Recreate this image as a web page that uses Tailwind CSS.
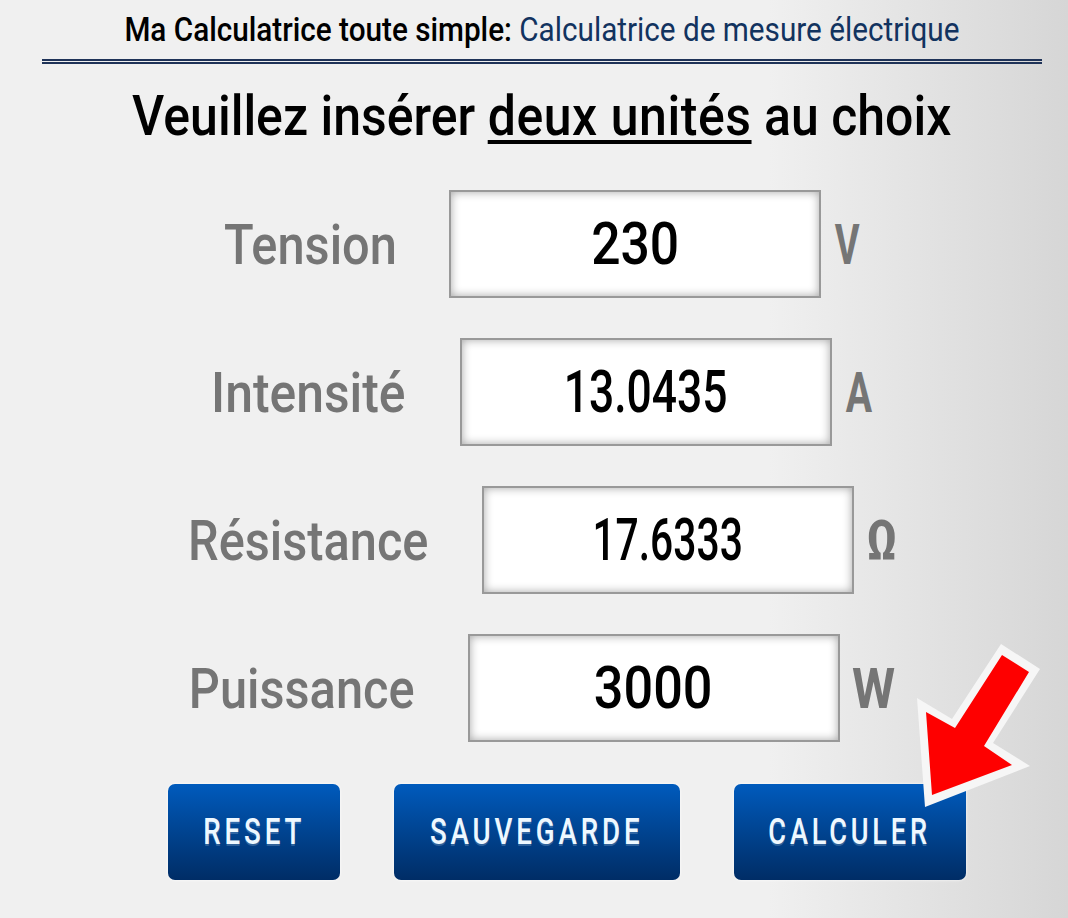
<!DOCTYPE html>
<html lang="fr">
<head>
    <meta charset="UTF-8">
    <meta name="viewport" content="width=device-width, initial-scale=1.0">
    <title>Calculatrice de mesure électrique</title>
    <script src="https://cdn.jsdelivr.net/npm/@tailwindcss/browser@4"></script>
</head>

<body class="relative w-[1068px] h-[918px] overflow-hidden font-['Roboto',sans-serif] bg-[linear-gradient(90deg,#f0f0f0_0%,#f0f0f0_72%,#d6d6d6_100%)]">

    <!-- header -->
    <div class="ml-[42px] w-[1000px] h-[64px] pt-[10px] border-b-[5px] border-double border-[#1f3358] flex justify-center text-[33px] leading-[40px] text-black whitespace-nowrap">
        <div class="scale-x-[0.9]">
            <span class="font-medium">Ma Calculatrice toute simple:</span> <span class="text-[#12335f]">Calculatrice de mesure électrique</span>
        </div>
    </div>

    <div class="mt-[22px] ml-[42px] w-[1000px] h-[60px] flex justify-center text-[56px] font-medium leading-[60px] text-black whitespace-nowrap">
        <h1 class="scale-x-[0.893]">
            Veuillez insérer <u class="underline decoration-[4px] underline-offset-[5px] tracking-[0.6px]">deux unités</u> au choix
        </h1>
    </div>

    <!-- fields -->
    <div class="mt-[44px] flex flex-col items-center gap-[40px] pl-[16px]">
        <div class="flex items-center">
            <div class="w-[170px] pt-[2px] flex justify-center text-[56px] font-medium text-[#757575]"><span class="scale-x-[0.87]">Tension</span></div>
            <div class="ml-[54px] w-[372px] h-[108px] flex items-center justify-center text-[60px] font-medium text-black bg-white border-2 border-[#999] shadow-[inset_0_0_10px_rgba(0,0,0,0.35)]"><span class="scale-x-[0.86]">230</span></div>
            <div class="ml-[14px] w-[24px] pt-[2px] flex justify-center text-[56px] font-bold text-[#757575]"><span class="scale-x-[0.68]">V</span></div>
        </div>
        <div class="flex items-center">
            <div class="w-[193px] pt-[2px] flex justify-center text-[56px] font-medium text-[#757575]"><span class="scale-x-[0.89]">Intensité</span></div>
            <div class="ml-[55px] w-[372px] h-[108px] flex items-center justify-center text-[60px] font-medium text-black bg-white border-2 border-[#999] shadow-[inset_0_0_10px_rgba(0,0,0,0.35)]"><span class="scale-x-[0.74]">13.0435</span></div>
            <div class="ml-[14px] w-[26px] pt-[2px] flex justify-center text-[56px] font-bold text-[#757575]"><span class="scale-x-[0.7]">A</span></div>
        </div>
        <div class="flex items-center">
            <div class="w-[240px] pt-[2px] flex justify-center text-[56px] font-medium text-[#757575]"><span class="scale-x-[0.87]">Résistance</span></div>
            <div class="ml-[53px] w-[372px] h-[108px] flex items-center justify-center text-[60px] font-medium text-black bg-white border-2 border-[#999] shadow-[inset_0_0_10px_rgba(0,0,0,0.35)]"><span class="scale-x-[0.68]">17.6333</span></div>
            <div class="ml-[14px] w-[28px] pt-[2px] flex justify-center text-[56px] font-bold text-[#757575]"><span class="scale-x-[0.82]">Ω</span></div>
        </div>
        <div class="flex items-center">
            <div class="w-[224px] pt-[2px] flex justify-center text-[56px] font-medium text-[#757575]"><span class="scale-x-[0.87]">Puissance</span></div>
            <div class="ml-[54px] w-[372px] h-[108px] flex items-center justify-center text-[60px] font-medium text-black bg-white border-2 border-[#999] shadow-[inset_0_0_10px_rgba(0,0,0,0.35)]"><span class="scale-x-[0.87]">3000</span></div>
            <div class="ml-[13px] w-[42px] pt-[2px] flex justify-center text-[56px] font-bold text-[#757575]"><span class="scale-x-[0.88]">W</span></div>
        </div>
    </div>

    <!-- buttons -->
    <div class="mt-[42px] ml-[168px] flex gap-[54px]">
        <button class="w-[172px] h-[96px] flex items-center justify-center rounded-[7px] bg-gradient-to-b from-[#005bbd] to-[#002d66] text-[#eef8ff] text-[36px] font-medium tracking-[5px] [text-shadow:0_2px_0_rgba(255,255,255,0.2)] shadow-[0_0_3px_#fff]"><span class="scale-x-[0.77]">RESET</span></button>
        <button class="w-[286px] h-[96px] flex items-center justify-center rounded-[7px] bg-gradient-to-b from-[#005bbd] to-[#002d66] text-[#eef8ff] text-[36px] font-medium tracking-[5px] [text-shadow:0_2px_0_rgba(255,255,255,0.2)] shadow-[0_0_3px_#fff]"><span class="scale-x-[0.77]">SAUVEGARDE</span></button>
        <button class="w-[232px] h-[96px] flex items-center justify-center rounded-[7px] bg-gradient-to-b from-[#005bbd] to-[#002d66] text-[#eef8ff] text-[36px] font-medium tracking-[5px] [text-shadow:0_2px_0_rgba(255,255,255,0.2)] shadow-[0_0_3px_#fff]"><span class="scale-x-[0.755]">CALCULER</span></button>
    </div>

    <!-- arrow over the button -->
    <svg class="absolute left-0 top-0 pointer-events-none" width="1068" height="918" viewBox="0 0 1068 918">
        <polygon fill="#f6f6f6" points="925,807 917,698 952,719 1001,644 1040,669 993,743 1030,766"/>
        <polygon fill="#fe0000" points="932,795 926,712 955,728 1002,655 1029,672 984,746 1012,765"/>
    </svg>

</body>
</html>
